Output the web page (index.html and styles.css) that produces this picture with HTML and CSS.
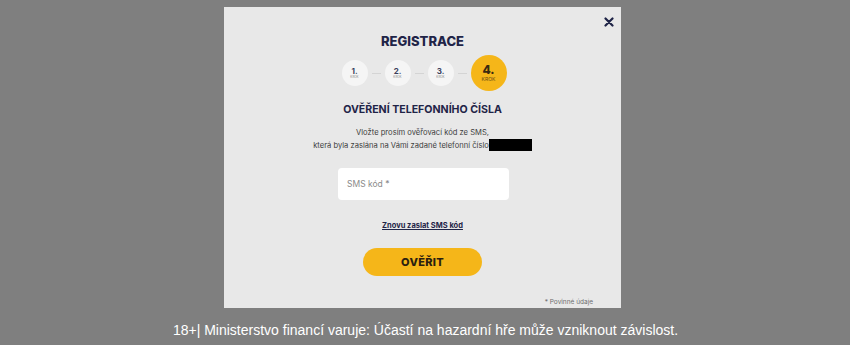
FILE: index.html
```html
<!DOCTYPE html>
<html lang="cs">
<head>
<meta charset="utf-8">
<link rel="stylesheet" href="styles.css">
</head>
<body>
<div class="page">
  <div class="modal">
    <button class="close" aria-label="Zavřít">
      <svg width="10" height="10" viewBox="0 0 10 10"><path d="M1.5 1.5 L8.5 8.5 M8.5 1.5 L1.5 8.5" stroke="#1f2447" stroke-width="2.2" stroke-linecap="round"/></svg>
    </button>
    <h1 class="title">REGISTRACE</h1>
    <div class="steps">
      <div class="step"><span class="num">1.</span><span class="lbl">KROK</span></div>
      <span class="line"></span>
      <div class="step"><span class="num">2.</span><span class="lbl">KROK</span></div>
      <span class="line"></span>
      <div class="step"><span class="num">3.</span><span class="lbl">KROK</span></div>
      <span class="line"></span>
      <div class="step active"><span class="num">4.</span><span class="lbl">KROK</span></div>
    </div>
    <h2 class="subtitle">OVĚŘENÍ TELEFONNÍHO ČÍSLA</h2>
    <p class="info">Vložte prosím ověřovací kód ze SMS,<br>která byla zaslána na Vámi zadané telefonní číslo<span class="redact"></span></p>
    <div class="field"><span class="placeholder">SMS kód *</span></div>
    <a class="resend" href="#">Znovu zaslat SMS kód</a>
    <button class="submit">OVĚŘIT</button>
    <div class="note">* Povinné údaje</div>
  </div>
  <div class="warning">18+| Ministerstvo financí varuje: Účastí na hazardní hře může vzniknout závislost.</div>
</div>
</body>
</html>
```
FILE: styles.css
```css
html, body {
  margin: 0;
  padding: 0;
}
body {
  background: #7f7f7f;
  width: 850px;
  height: 345px;
  overflow: hidden;
  font-family: Inter, "Noto Sans", sans-serif;
}
.page {
  padding-top: 7px;
  display: flex;
  flex-direction: column;
}
.modal {
  position: relative;
  margin-left: 224px;
  width: 397px;
  height: 301px;
  background: #e8e8e8;
  display: flex;
  flex-direction: column;
  align-items: center;
  box-sizing: border-box;
  padding-top: 27px;
  color: #1f2447;
}
.close {
  position: absolute;
  top: 8px;
  right: 5px;
  width: 14px;
  height: 14px;
  border: 0;
  padding: 0;
  background: none;
  display: flex;
  align-items: center;
  justify-content: center;
}
.title {
  margin: 0;
  font-size: 13px;
  font-weight: 800;
  line-height: 14px;
  letter-spacing: 0;
}
.steps {
  margin-top: 7px;
  margin-left: 3px;
  display: flex;
  align-items: center;
  gap: 4px;
}
.step {
  width: 26px;
  height: 26px;
  border-radius: 50%;
  background: #f5f5f5;
  display: flex;
  flex-direction: column;
  align-items: center;
  justify-content: center;
  color: #3a3f5c;
}
.step .num {
  font-size: 8px;
  font-weight: 700;
  line-height: 8px;
}
.step .lbl {
  font-size: 3px;
  line-height: 4px;
  color: #8a8a8a;
}
.step.active {
  width: 36px;
  height: 36px;
  background: #f5b619;
  color: #3a2a10;
}
.step.active .num {
  font-size: 12px;
  line-height: 12px;
  font-weight: 800;
}
.step.active .lbl {
  font-size: 5px;
  line-height: 6px;
  color: #6a4c14;
}
.line {
  width: 9px;
  height: 1px;
  background: #d4d4d4;
}
.subtitle {
  margin: 12px 0 0;
  font-size: 10.6px;
  font-weight: 700;
  line-height: 14px;
  letter-spacing: 0;
}
.info {
  margin: 10px 0 0;
  font-size: 7.6px;
  line-height: 12px;
  text-align: center;
  color: #3e3e3e;
}
.redact {
  display: inline-block;
  width: 43px;
  height: 12px;
  background: #000;
  vertical-align: -3px;
}
.field {
  margin-top: 16px;
  margin-left: 2px;
  width: 171px;
  height: 32px;
  background: #fff;
  border-radius: 4px;
  box-sizing: border-box;
  padding-left: 9px;
  display: flex;
  align-items: center;
}
.placeholder {
  font-size: 8.5px;
  color: #8a8a8a;
}
.resend {
  margin-top: 21px;
  font-size: 7.5px;
  font-weight: 700;
  color: #1f2447;
  text-decoration: underline;
  line-height: 10px;
}
.submit {
  margin-top: 17px;
  width: 119px;
  height: 28px;
  border: 0;
  border-radius: 14px;
  background: #f5b619;
  color: #2a2010;
  font-family: inherit;
  font-size: 11px;
  font-weight: 800;
  letter-spacing: 0.3px;
}
.note {
  position: absolute;
  right: 28px;
  bottom: 2px;
  font-size: 6.5px;
  color: #6e6e6e;
}
.warning {
  margin-top: 14px;
  text-align: center;
  color: #fff;
  font-family: "Liberation Sans", Arial, sans-serif;
  font-size: 14px;
  line-height: 16px;
  padding-left: 1px;
}
```
